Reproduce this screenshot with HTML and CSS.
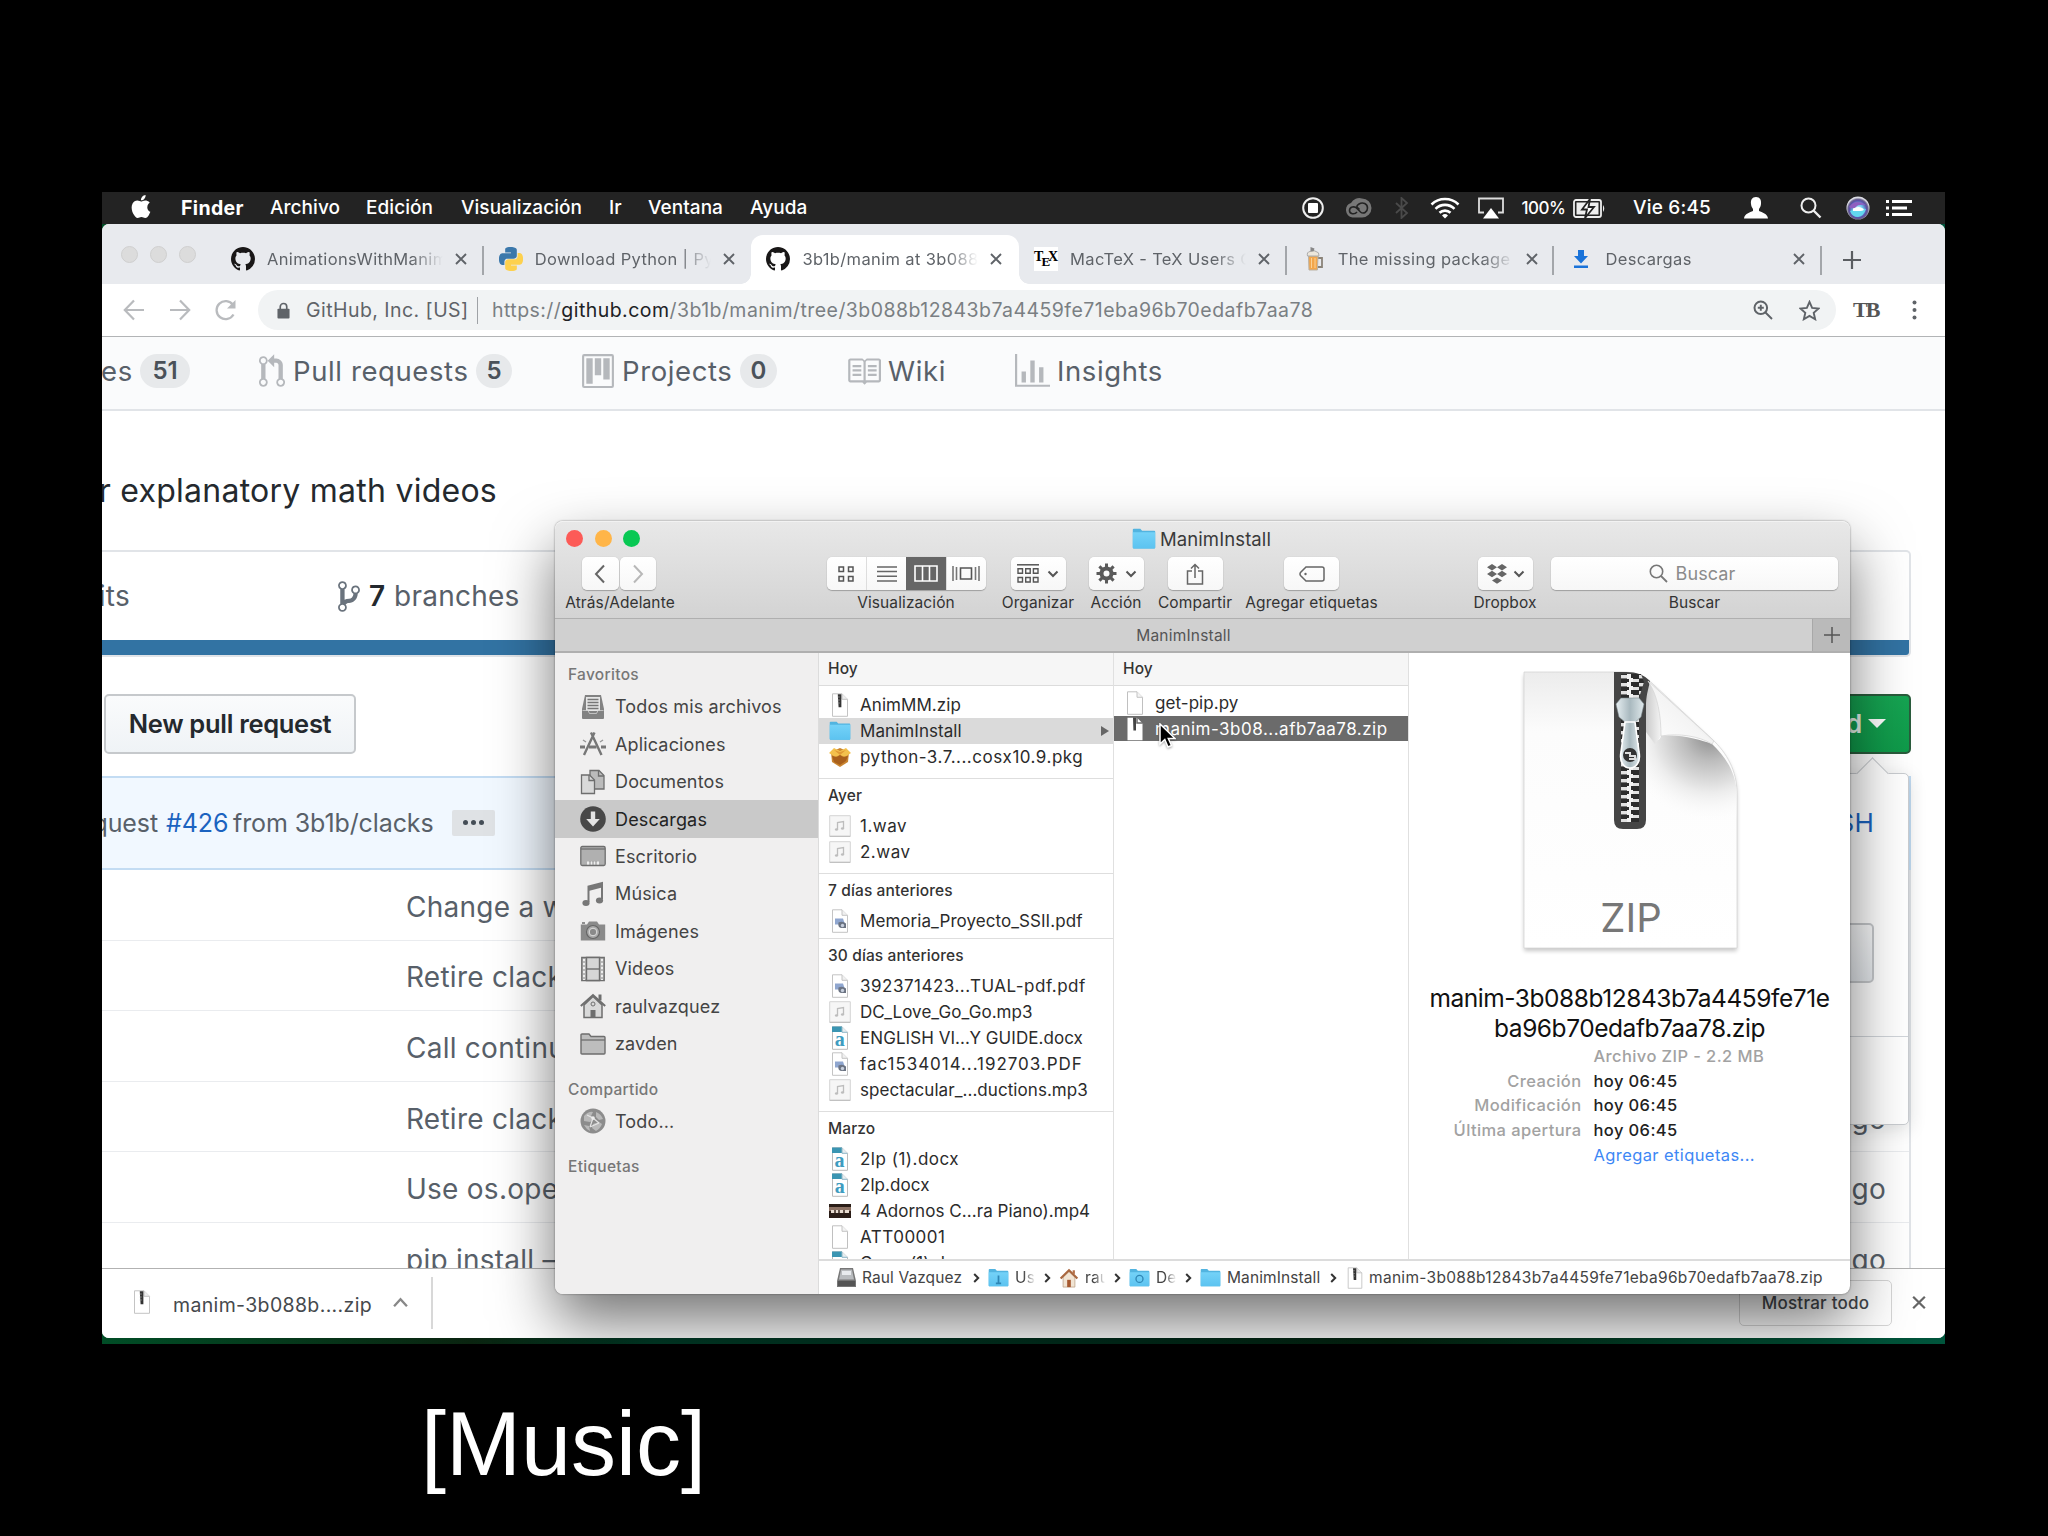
FILE: index.html
```
<!DOCTYPE html>
<html lang="es">
<head>
<meta charset="utf-8">
<title>Finder</title>
<link rel="stylesheet" href="styles.css">
</head>
<body>
<svg class="sprite" aria-hidden="true">
  <defs>
    <linearGradient id="g-folder" x1="0" y1="0" x2="0" y2="1"><stop offset="0" stop-color="#74d2f8"/><stop offset="1" stop-color="#5cc3f0"/></linearGradient>
    <linearGradient id="g-page" x1="0" y1="0" x2="0" y2="1"><stop offset="0" stop-color="#ececec"/><stop offset=".22" stop-color="#fcfcfc"/><stop offset="1" stop-color="#fff"/></linearGradient>
    <linearGradient id="g-flap" x1="0" y1="1" x2=".7" y2=".3"><stop offset="0" stop-color="#fff"/><stop offset=".7" stop-color="#f4f4f4"/><stop offset="1" stop-color="#dcdcdc"/></linearGradient>
    <radialGradient id="g-curl" gradientUnits="userSpaceOnUse" cx="186" cy="62" r="90"><stop offset="0" stop-color="#8a8a8a"/><stop offset=".3" stop-color="#bdbdbd"/><stop offset=".65" stop-color="#ececec"/><stop offset="1" stop-color="#fff" stop-opacity="0"/></radialGradient>
    <linearGradient id="g-fold" gradientUnits="userSpaceOnUse" x1="121" y1="0" x2="137" y2="0"><stop offset="0" stop-color="#c8c8c8"/><stop offset="1" stop-color="#f4f4f4"/></linearGradient>
    <linearGradient id="g-steel" x1="0" y1="0" x2="1" y2="0"><stop offset="0" stop-color="#e6eef1"/><stop offset=".5" stop-color="#a9b9bf"/><stop offset="1" stop-color="#dfe8eb"/></linearGradient>
    <pattern id="teeth" width="18" height="8" patternUnits="userSpaceOnUse" x="97" y="2"><rect width="18" height="8" fill="#2c2c2c"/><rect x="0" y="1" width="8" height="3.4" fill="#e2e2e2"/><rect x="9" y="5" width="9" height="3" fill="#e2e2e2"/><rect x="6" y="0" width="4" height="5" fill="#f2f2f2"/><rect x="8" y="4" width="4" height="4" fill="#f2f2f2"/></pattern>
    <radialGradient id="g-siri" cx=".5" cy=".55" r=".5"><stop offset="0" stop-color="#e9fbff"/><stop offset=".4" stop-color="#6fc9ee"/><stop offset=".75" stop-color="#5b4fa8"/><stop offset=".86" stop-color="#6a6590"/><stop offset="1" stop-color="#dcdce4"/></radialGradient>
  </defs>
  <symbol id="i-x" viewBox="0 0 12 12"><path d="M1 1l10 10M11 1L1 11" fill="none" stroke="currentColor" stroke-width="1.9"/></symbol>
  <symbol id="i-github" viewBox="0 0 16 16"><path fill="#191717" d="M8 0C3.58 0 0 3.58 0 8c0 3.54 2.29 6.53 5.47 7.59.4.07.55-.17.55-.38 0-.19-.01-.82-.01-1.49-2.01.37-2.53-.49-2.69-.94-.09-.23-.48-.94-.82-1.13-.28-.15-.68-.52-.01-.53.63-.01 1.08.58 1.23.82.72 1.21 1.87.87 2.33.66.07-.52.28-.87.51-1.07-1.78-.2-3.64-.89-3.64-3.95 0-.87.31-1.59.82-2.15-.08-.2-.36-1.02.08-2.12 0 0 .67-.21 2.2.82.64-.18 1.32-.27 2-.27.68 0 1.36.09 2 .27 1.53-1.04 2.2-.82 2.2-.82.44 1.1.16 1.92.08 2.12.51.56.82 1.27.82 2.15 0 3.07-1.87 3.75-3.65 3.95.29.25.54.73.54 1.48 0 1.07-.01 1.93-.01 2.2 0 .21.15.46.55.38A8.013 8.013 0 0016 8c0-4.42-3.58-8-8-8z"/></symbol>
  <symbol id="i-py" viewBox="0 0 24 24"><path d="M14.25.18l.9.2.73.26.59.3.45.32.34.34.25.34.16.33.1.3.04.26.02.2-.01.13V8.5l-.05.63-.13.55-.21.46-.26.38-.3.31-.33.25-.35.19-.35.14-.33.1-.3.07-.26.04-.21.02H8.77l-.69.05-.59.14-.5.22-.41.27-.33.32-.27.35-.2.36-.15.37-.1.35-.07.32-.04.27-.02.21v3.06H3.17l-.21-.03-.28-.07-.32-.12-.35-.18-.36-.26-.36-.36-.35-.46-.32-.59-.28-.73-.21-.88-.14-1.05-.05-1.23.06-1.22.16-1.04.24-.87.32-.71.36-.57.4-.44.42-.33.42-.24.4-.16.36-.1.32-.05.24-.01h.16l.06.01h8.16v-.83H6.18l-.01-2.75-.02-.37.05-.34.11-.31.17-.28.25-.26.31-.23.38-.2.44-.18.51-.15.58-.12.64-.1.71-.06.77-.04.84-.02 1.27.05z"/></symbol>
  <symbol id="i-chev" viewBox="0 0 7 10"><path d="M1.2 1l4 4-4 4" fill="none" stroke="#333" stroke-width="2"/></symbol>
  <symbol id="i-down" viewBox="0 0 12 8"><path d="M1.5 1.5L6 6l4.500-4.500" fill="none" stroke="#555" stroke-width="2"/></symbol>
  <symbol id="f-zip" viewBox="0 0 22 24"><path d="M3.500.8h9.500l5.500 5.500v17h-15z" fill="#fff" stroke="#c4c4c4"/><path d="M13 .8v5.500h5.500" fill="#eee" stroke="#c4c4c4"/><path d="M8.800 1.300h3.600v13H9.600z" fill="#333"/><path d="M8.800 4h2M8.800 7h2M8.800 10h2" stroke="#999" stroke-width=".8"/></symbol>
  <symbol id="f-zipsel" viewBox="0 0 22 24"><path d="M3.500.8h9.500l5.500 5.500v17h-15z" fill="#fff"/><path d="M13 0v6h6" fill="none" stroke="#6b6b6b" stroke-width="1.500"/><path d="M9 .5h3v13H9.400z" fill="#444"/></symbol>
  <symbol id="f-blank" viewBox="0 0 22 24"><path d="M3.500.8h9.500l5.500 5.500v17h-15z" fill="#fff" stroke="#c0c0c0"/><path d="M13 .8v5.500h5.500" fill="#f3f3f3" stroke="#c4c4c4"/></symbol>
  <symbol id="f-folder" viewBox="0 0 24 22"><path d="M.8 1.800q0-1 1-1h6.500l1.800 2h12.100q1 0 1 1V19.500q0 1-1 1H1.800q-1 0-1-1z" fill="#52b4e0"/><path d="M.8 4.300h22.400V19.500q0 1-1 1H1.800q-1 0-1-1z" fill="url(#g-folder)"/></symbol>
  <symbol id="f-pkg" viewBox="0 0 22 22"><path d="M2 6l9-4 9 4-1 10-8 5-8-5z" fill="#c9842f"/><path d="M0 7l5-5 6 3 6-3 5 5-6 4-5-2-5 2z" fill="#f3c14d"/><path d="M3 10l5 1 3-2 3 2 5-1-2 5-6 4-6-3z" fill="#a9601c"/><path d="M5 4l6 2 6-2-6 5z" fill="#e09a35"/></symbol>
  <symbol id="f-audio" viewBox="0 0 22 22"><path d="M.7.7h20.600v20.600H.7z" fill="#f6f6f6" stroke="#d4d4d4"/><path d="M.7 21.300h20.600" stroke="#bbb"/><path d="M8.500 14.500V7.500l6-1v7" fill="none" stroke="#bdbdbd" stroke-width="1.300"/><ellipse cx="7.500" cy="14.500" rx="1.600" ry="1.200" fill="#bdbdbd"/><ellipse cx="13.500" cy="13.500" rx="1.600" ry="1.200" fill="#bdbdbd"/></symbol>
  <symbol id="f-pdf" viewBox="0 0 22 24"><path d="M3.500.8h9.500l5.500 5.500v17h-15z" fill="#fff" stroke="#c4c4c4"/><path d="M13 .8v5.500h5.500" fill="#f0f0f0" stroke="#c4c4c4"/><path d="M6 9.500h8l2 6H6z" fill="#8fa6cf"/><path d="M9.500 13.500q4-2 7.500 1v4.500h-4q-4.500 0-3.500-5.500z" fill="#6b7382"/><circle cx="13.500" cy="16.500" r="1.700" fill="#c7cfdd"/></symbol>
  <symbol id="f-docx" viewBox="0 0 22 24"><path d="M3.500.8h9.500l5.500 5.500v17h-15z" fill="#fff" stroke="#bbb"/><path d="M3 .5h10v5.500H3z" fill="#3b95b2"/><path d="M13 .8v5.500h5.500" fill="#e6eef1" stroke="#8db6c6"/><text x="10.800" y="20" text-anchor="middle" class="glyph-a">a</text></symbol>
  <symbol id="f-video" viewBox="0 0 22 14"><path d="M0 0h22v14H0z" fill="#2a1d17"/><path d="M0 3h22v4H0z" fill="#8c7264"/><path d="M2 6h18v3H2z" fill="#e9ddd2"/><path d="M6 6v3M10 6v3M15 6v3" stroke="#3a2a22" stroke-width="1.500"/></symbol>
  <symbol id="f-home" viewBox="0 0 20 22"><path d="M3.500 10v11h13V10L10 4z" fill="#f1e4d3" stroke="#b99c80" stroke-width=".8"/><path d="M.8 11.500L10 2.500l9.200 9" fill="none" stroke="#a9673f" stroke-width="2.400"/><path d="M14 2.500h2.500v4H14z" fill="#b5714a"/><path d="M8 13h4v8H8z" fill="#a5582f"/></symbol>
</svg>

<main class="desktop">
  <header class="menubar">
    <nav class="menus">
      <svg class="apple" viewBox="0 0 24 24"><path fill="#fff" d="M12.152 6.896c-.948 0-2.415-1.078-3.96-1.04-2.04.027-3.91 1.183-4.961 3.014-2.117 3.675-.546 9.103 1.519 12.09 1.013 1.454 2.208 3.09 3.792 3.039 1.52-.065 2.09-.987 3.935-.987 1.831 0 2.35.987 3.96.948 1.637-.026 2.676-1.48 3.676-2.948 1.156-1.688 1.636-3.325 1.662-3.415-.039-.013-3.182-1.221-3.22-4.857-.026-3.04 2.48-4.494 2.597-4.559-1.429-2.09-3.623-2.324-4.39-2.376-2-.156-3.675 1.09-4.61 1.09zM15.53 3.83c.843-1.012 1.4-2.427 1.245-3.83-1.207.052-2.662.805-3.532 1.818-.78.896-1.454 2.338-1.273 3.714 1.338.104 2.715-.688 3.559-1.701"/></svg>
      <b>Finder</b><span>Archivo</span><span>Edición</span><span>Visualización</span><span>Ir</span><span>Ventana</span><span>Ayuda</span>
    </nav>
    <div class="status">
      <svg width="22" height="22" viewBox="0 0 22 22"><circle cx="11" cy="11" r="9.800" fill="none" stroke="#eee" stroke-width="2"/><rect x="6" y="6" width="10" height="10" rx="1" fill="#fff"/></svg>
      <svg width="28" height="22" viewBox="0 0 28 22"><path d="M8.500 20.500a7.500 7.500 0 01-1.500-14.500A9.500 9.500 0 0118 1.500a9.500 9.500 0 010 19z" fill="#777"/><path d="M13 15c-2.500 3-7.500 2-7.500-1.500s5-5 7.500-2l3.500 3.500c3 2.500 7 0 7-4s-4.500-6.500-8.500-4-1.500 3.500.5 5.500" fill="none" stroke="#232323" stroke-width="1.600"/></svg>
      <svg width="14" height="22" viewBox="0 0 14 22"><path d="M1 6l11 10-5.500 5V1L12 6 1 16" fill="none" stroke="#4a4a4a" stroke-width="1.800"/></svg>
      <svg width="30" height="22" viewBox="0 0 30 22"><g fill="none" stroke="#fff" stroke-width="2.600"><path d="M1.500 7.500a19.500 19.500 0 0127 0"/><path d="M5.500 11.800a13.500 13.500 0 0119 0"/><path d="M9.500 15.800a8 8 0 0111 0"/></g><path d="M12 18.500a4.400 4.400 0 016 0l-3 3z" fill="#fff"/></svg>
      <svg width="26" height="22" viewBox="0 0 26 22"><path d="M6 15.500H1V1.500h24v14h-5" fill="none" stroke="#ddd" stroke-width="1.800"/><path d="M13 11l8 10.500H5z" fill="#fff"/></svg>
      <span class="pct">100%</span>
      <svg width="33" height="19" viewBox="0 0 33 19"><rect x="1" y="1" width="27" height="17" rx="2" fill="none" stroke="#eee" stroke-width="1.800"/><rect x="3.500" y="3.500" width="22" height="12" fill="#eee"/><path d="M30 6q2.500 3.500 0 7z" fill="#eee"/><path d="M17 0L9 10.500h5L12 19l9-11h-5.500z" fill="#fff" stroke="#222" stroke-width="1.800"/></svg>
      <span class="clock">Vie 6:45</span>
      <svg width="24" height="22" viewBox="0 0 24 22"><path d="M12 0c4 0 5.500 3 5 7-.3 3-1.500 4-2 5v2c3 1.500 8.500 2.500 9 7.500H0c.5-5 6-6 9-7.500v-2c-.5-1-1.700-2-2-5-.5-4 1-7 5-7z" fill="#fff"/></svg>
      <svg width="22" height="22" viewBox="0 0 22 22"><circle cx="8.500" cy="8.500" r="7" fill="none" stroke="#eee" stroke-width="2"/><path d="M13.500 13.500l7 7" stroke="#eee" stroke-width="2.400"/></svg>
      <svg width="24" height="24" viewBox="0 0 24 24"><circle cx="12" cy="12" r="11.500" fill="url(#g-siri)"/><path d="M3 11q7-9 17-2-8-1-10 2t-7 0z" fill="#8f5fc0"/><path d="M4 15q8-4 16-2-2 7-8 8-6 0-8-6z" fill="#62d7ee"/><path d="M7 12.500q6-3 10 0t-10 2.500z" fill="#fff"/></svg>
      <svg width="26" height="16" viewBox="0 0 26 16"><path d="M0 1.500h3M0 8h3M0 14.500h3M6 1.500h20M6 8h15M6 14.500h20" stroke="#fff" stroke-width="2.800"/></svg>
    </div>
  </header>

  <section class="browser">
    <div class="tabstrip">
      <div class="dots"><i></i><i></i><i></i></div>
      <div class="tab sep"><svg class="fav"><use href="#i-github"/></svg><span class="tt">AnimationsWithManim</span><svg class="x"><use href="#i-x"/></svg></div>
      <div class="tab"><svg class="fav" viewBox="0 0 24 24"><use href="#i-py" width="24" height="24" fill="#3b78ab"/><g transform="rotate(180 12 12)"><use href="#i-py" width="24" height="24" fill="#fdd14e"/></g></svg><span class="tt">Download Python | Pyt</span><svg class="x"><use href="#i-x"/></svg></div>
      <div class="tab active"><svg class="fav"><use href="#i-github"/></svg><span class="tt">3b1b/manim at 3b088b</span><svg class="x"><use href="#i-x"/></svg></div>
      <div class="tab sep"><span class="texfav">T<sub>E</sub>X</span><span class="tt">MacTeX - TeX Users Gr</span><svg class="x"><use href="#i-x"/></svg></div>
      <div class="tab sep"><svg class="fav" viewBox="0 0 24 24"><path d="M16 11h4v9H16" fill="none" stroke="#8a8378" stroke-width="1.800"/><path d="M6.500 9h9.500l-.6 14H7z" fill="#f3a64a" stroke="#b9b1a4"/><path d="M5.500 9q-1-4 2.500-4.500 3-2.500 6 0 3.500.5 3 4.500z" fill="#ece7dc" stroke="#aaa"/><path d="M8.500 0l4 1.500-1 3h-3z" fill="#888"/><path d="M9.500 11v10M13 11v10" stroke="#fbd195"/></svg><span class="tt">The missing package m</span><svg class="x"><use href="#i-x"/></svg></div>
      <div class="tab sep"><svg class="fav" viewBox="0 0 24 24"><path d="M9 3h6v6h4l-7 7.500L5 9h4zM5 18.500h14v2.500H5z" fill="#1a73d9"/></svg><span class="tt">Descargas</span><svg class="x"><use href="#i-x"/></svg></div>
      <svg class="plus" viewBox="0 0 18 18"><path d="M9 0v18M0 9h18" stroke="#5a5d61" stroke-width="2.200"/></svg>
    </div>

    <div class="toolbar">
      <div class="navbtns">
        <svg width="22" height="22" viewBox="0 0 22 22"><path d="M21 11H2M11 1.500L1.800 11l9.200 9.500" fill="none" stroke="#b9bbbe" stroke-width="2.200"/></svg>
        <svg width="22" height="22" viewBox="0 0 22 22"><path d="M1 11h19M11 1.500l9.200 9.500-9.200 9.500" fill="none" stroke="#b9bbbe" stroke-width="2.200"/></svg>
        <svg width="22" height="22" viewBox="0 0 22 22"><path d="M18.500 15.500a9 9 0 11-.5-9.500" fill="none" stroke="#b9bbbe" stroke-width="2.300"/><path d="M20.500 1v8.500H12z" fill="#b9bbbe"/></svg>
      </div>
      <div class="omnibox">
        <svg class="lock" viewBox="0 0 14 18"><path d="M3.500 8V5a3.500 3.500 0 017 0v3" fill="none" stroke="#5f6368" stroke-width="1.800"/><rect x=".5" y="7" width="13" height="10.500" rx="1" fill="#5f6368"/></svg>
        <span class="org">GitHub, Inc. [US]</span>
        <span class="url">https://<em>github.com</em>/3b1b/manim/tree/3b088b12843b7a4459fe71eba96b70edafb7aa78</span>
        <svg class="mag" viewBox="0 0 20 20"><circle cx="7.800" cy="7.800" r="6.300" fill="none" stroke="#5f6368" stroke-width="2"/><path d="M12.500 12.500l6.500 6.500M4.800 7.800h6M7.800 4.800v6" stroke="#5f6368" stroke-width="1.900"/></svg>
        <svg class="star" viewBox="0 0 20 20"><path d="M10 1.800l2.500 5.700 6.200.6-4.700 4.100 1.400 6.100L10 15.100l-5.400 3.200L6 12.200 1.300 8.100l6.200-.6z" fill="none" stroke="#5f6368" stroke-width="1.800"/></svg>
      </div>
      <span class="ext">TB</span>
      <svg class="more" viewBox="0 0 5 20"><circle cx="2.500" cy="2.500" r="2"/><circle cx="2.500" cy="10" r="2"/><circle cx="2.500" cy="17.500" r="2"/></svg>
    </div>

    <div class="page">
      <nav class="reponav">
        <div class="rn rn-issues"><span>es</span><b>51</b></div>
        <div class="rn rn-pulls"><svg width="26" height="35" viewBox="0 0 12 16"><path d="M11 11.280V5c-.030-.780-.340-1.470-.940-2.060C9.460 2.350 8.780 2.030 8 2H7V0L4 3l3 3V4h1c.270.020.480.110.690.310.210.200.300.420.310.690v6.280A1.993 1.993 0 0 0 10 15a1.993 1.993 0 0 0 1-3.720zm-1 2.920c-.660 0-1.200-.550-1.200-1.200 0-.650.550-1.200 1.200-1.200.650 0 1.200.550 1.200 1.200 0 .650-.550 1.200-1.200 1.200zM4 3c0-1.110-.890-2-2-2a1.993 1.993 0 0 0-1 3.720v6.560A1.993 1.993 0 0 0 2 15a1.993 1.993 0 0 0 1-3.720V4.720c.590-.340 1-.980 1-1.720zm-.8 10c0 .660-.550 1.200-1.200 1.200-.650 0-1.200-.550-1.200-1.200 0-.650.550-1.200 1.200-1.200.650 0 1.200.550 1.200 1.200zM2 4.200C1.340 4.200.8 3.650.8 3c0-.650.550-1.200 1.200-1.200.650 0 1.200.550 1.200 1.200 0 .650-.550 1.200-1.200 1.200z"/></svg><span>Pull requests</span><b>5</b></div>
        <div class="rn rn-projects"><svg width="32" height="34" viewBox="0 0 15 16"><path fill-rule="evenodd" d="M10 12h3V2h-3v10zm-4-2h3V2H6v8zm-4 4h3V2H2v12zm-1 1h13V1H1v14zM14 0H1a1 1 0 0 0-1 1v14a1 1 0 0 0 1 1h13a1 1 0 0 0 1-1V1a1 1 0 0 0-1-1z"/></svg><span>Projects</span><b>0</b></div>
        <div class="rn rn-wiki"><svg width="35" height="35" viewBox="0 0 16 16"><path d="M3 5h4v1H3V5zm0 3h4V7H3v1zm0 2h4V9H3v1zm11-5h-4v1h4V5zm0 2h-4v1h4V7zm0 2h-4v1h4V9zm2-6v9c0 .550-.450 1-1 1H9.500l-1 1-1-1H2c-.550 0-1-.450-1-1V3c0-.550.450-1 1-1h5.500l1 1 1-1H15c.550 0 1 .450 1 1zm-8 .5L7.500 3H2v9h6V3.500zm7-.5H9.500l-.5.5V12h6V3z"/></svg><span>Wiki</span></div>
        <div class="rn rn-insights"><svg width="35" height="35" viewBox="0 0 16 16"><path d="M16 14v1H0V0h1v14h15zM5 13H3V8h2v5zm4 0H7V3h2v10zm4 0h-2V6h2v7z"/></svg><span>Insights</span></div>
      </nav>
      <p class="desc"><span>r explanatory math videos</span></p>
      <div class="stats">
        <div class="statrow">
          <span class="commits">its</span>
          <svg class="branch" viewBox="0 0 10 16"><path fill="#6a737d" d="M10 5c0-1.110-.890-2-2-2a1.993 1.993 0 0 0-1 3.720v.3c-.020.520-.230.980-.630 1.380-.4.4-.860.610-1.380.630-.830.020-1.480.160-2 .450V4.720a1.993 1.993 0 0 0-1-3.720C.880 1 0 1.890 0 3a2 2 0 0 0 1 1.720v6.560c-.590.350-1 .990-1 1.720 0 1.110.890 2 2 2 1.110 0 2-.890 2-2 0-.530-.2-1-.530-1.360.090-.060.480-.410.590-.470.250-.110.560-.170.940-.170 1.050-.050 1.950-.450 2.750-1.250S8.950 7.770 9 6.730h-.020C9.590 6.370 10 5.730 10 5zM2 1.800c.660 0 1.200.550 1.200 1.200 0 .650-.550 1.200-1.200 1.200C1.350 4.200.8 3.650.8 3c0-.650.550-1.200 1.200-1.200zm0 12.410c-.660 0-1.200-.550-1.200-1.200 0-.650.550-1.200 1.200-1.200.650 0 1.200.550 1.200 1.200 0 .650-.550 1.200-1.200 1.200zm6-8c-.660 0-1.200-.550-1.200-1.200 0-.650.550-1.200 1.200-1.200.650 0 1.200.550 1.200 1.200 0 .650-.550 1.200-1.200 1.200z"/></svg>
          <b>7</b><span>branches</span>
        </div>
        <div class="langbar"></div>
      </div>
      <div class="actions">
        <button class="btn">New pull request</button>
        <button class="btn green">d<i></i></button>
      </div>
      <div class="files">
        <div class="tease"><span class="q">quest</span><a>#426</a><span>from 3b1b/clacks</span><span class="dots3"><i></i><i></i><i></i></span></div>
        <div class="frow"><span>Change a w</span></div>
        <div class="frow"><span>Retire clack</span></div>
        <div class="frow"><span>Call continu</span></div>
        <div class="frow"><span>Retire clack</span><span>go</span></div>
        <div class="frow"><span>Use os.ope</span><span>go</span></div>
        <div class="frow"><span>pip install –</span><span>go</span></div>
      </div>
      <div class="popover"><div class="poptop"><a>SH</a><div class="copy"></div></div></div>
    </div>

    <footer class="shelf">
      <svg class="zipmini" width="22" height="24"><use href="#f-zip"/></svg>
      <span class="dl">manim-3b088b....zip</span>
      <svg class="caret" viewBox="0 0 14 10"><path d="M1 8.500l6-6.500 6 6.500" fill="none" stroke="#888" stroke-width="2.200"/></svg>
      <span class="vr"></span>
      <button class="showall">Mostrar todo</button>
      <svg class="close" viewBox="0 0 12 12"><use href="#i-x"/></svg>
    </footer>
  </section>

  <section class="finder">
    <header class="fhead">
      <div class="ftitle">
        <div class="lights"><i class="r"></i><i class="y"></i><i class="g"></i></div>
        <div class="tname"><svg width="24" height="22"><use href="#f-folder"/></svg><span>ManimInstall</span></div>
      </div>
      <div class="tools">
        <div class="tool t-nav"><div class="pair"><span class="fb"><svg width="12" height="20" viewBox="0 0 12 20"><path d="M10 1.500L2 10l8 8.500" fill="none" stroke="#666" stroke-width="2"/></svg></span><span class="fb"><svg width="12" height="20" viewBox="0 0 12 20"><path d="M2 1.500l8 8.500-8 8.500" fill="none" stroke="#b8b8b8" stroke-width="2"/></svg></span></div><label>Atrás/Adelante</label></div>
        <div class="tool t-view"><div class="fb seg">
          <span><svg width="16" height="16" viewBox="0 0 16 16"><path d="M1 1h4.500v4.500H1zM10.500 1H15v4.500h-4.500zM1 10.500h4.500V15H1zM10.500 10.500H15V15h-4.500z" fill="none" stroke="#555" stroke-width="1.500"/></svg></span>
          <span><svg width="20" height="16" viewBox="0 0 20 16"><path d="M0 1h20M0 5.600h20M0 10.200h20M0 14.900h20" stroke="#666" stroke-width="1.500"/></svg></span>
          <span class="on"><svg width="24" height="17" viewBox="0 0 24 17"><path d="M1 1h22v15H1z" fill="none" stroke="#fff" stroke-width="1.600"/><path d="M8.500 1v15M15.500 1v15" stroke="#fff" stroke-width="1.600"/></svg></span>
          <span><svg width="28" height="17" viewBox="0 0 28 17"><path d="M8.500 3h11v11h-11z" fill="none" stroke="#555" stroke-width="1.600"/><path d="M1 1v15M27 1v15M4.500 2v13M23.500 2v13" stroke="#777" stroke-width="1.600"/></svg></span>
        </div><label>Visualización</label></div>
        <div class="tool t-org"><span class="fb"><svg width="22" height="20" viewBox="0 0 22 20"><path d="M0 .8h22" stroke="#555" stroke-width="1.500"/><path d="M1 4.800h4.500v4.500H1zM8.700 4.800h4.500v4.500H8.700zM16.400 4.800H21v4.500h-4.600zM1 13.500h4.500V18H1zM8.700 13.500h4.500V18H8.700zM16.400 13.500H21V18h-4.600z" fill="none" stroke="#555" stroke-width="1.400"/></svg><svg width="12" height="8"><use href="#i-down"/></svg></span><label>Organizar</label></div>
        <div class="tool t-act"><span class="fb"><svg width="21" height="21" viewBox="0 0 21 21"><circle cx="10.500" cy="10.500" r="5" fill="none" stroke="#5a5a5a" stroke-width="4"/><g stroke="#5a5a5a" stroke-width="3"><path d="M10.500.5v4M10.500 16.500v4M.5 10.500h4M16.500 10.500h4M3.400 3.400l3 3M14.600 14.600l3 3M3.400 17.600l3-3M14.600 6.400l3-3"/></g></svg><svg width="12" height="8"><use href="#i-down"/></svg></span><label>Acción</label></div>
        <div class="tool t-share"><span class="fb"><svg width="18" height="22" viewBox="0 0 18 22"><path d="M6 8H1.500v13h15V8H12" fill="none" stroke="#666" stroke-width="1.500"/><path d="M9 15V1.500M5 5.500l4-4 4 4" fill="none" stroke="#666" stroke-width="1.500"/></svg></span><label>Compartir</label></div>
        <div class="tool t-tag"><span class="fb"><svg width="26" height="16" viewBox="0 0 26 16"><path d="M7 1h16q2 0 2 2v10q0 2-2 2H7L1.500 9.500q-1-1.500 0-3z" fill="none" stroke="#666" stroke-width="1.500"/><circle cx="6.500" cy="8" r="1.200" fill="#666"/></svg></span><label>Agregar etiquetas</label></div>
        <div class="tool t-drop"><span class="fb"><svg width="22" height="20" viewBox="0 0 22 20"><path d="M6 0l5 3.200-5 3.200L1 3.200zM16 0l5 3.200-5 3.200-5-3.200zM6 6.800l5 3.200-5 3.200L1 10zM16 6.800l5 3.200-5 3.200-5-3.200zM11 13.400l5 3.200-5 3.200-5-3.200z" fill="#666"/></svg><svg width="12" height="8"><use href="#i-down"/></svg></span><label>Dropbox</label></div>
        <div class="tool t-search"><span class="fb"><svg width="19" height="19" viewBox="0 0 19 19"><circle cx="7.500" cy="7.500" r="6.200" fill="none" stroke="#777" stroke-width="1.600"/><path d="M12 12l6 6" stroke="#777" stroke-width="1.800"/></svg><span class="ph">Buscar</span></span><label>Buscar</label></div>
      </div>
    </header>
    <div class="ftabs"><span>ManimInstall</span><i><svg width="16" height="16" viewBox="0 0 16 16"><path d="M8 0v16M0 8h16" stroke="#555" stroke-width="1.500"/></svg></i></div>
    <div class="fbody">
      <aside class="side">
        <h4>Favoritos</h4>
        <ul>
          <li><svg viewBox="0 0 26 26"><path d="M5 1h16l3 14v9q0 1-1 1H3q-1 0-1-1v-9z" fill="#828282"/><path d="M6 3h14v14H6z" fill="#e6e6e6"/><path d="M7.500 5.500h11M7.500 8.500h11M7.500 11.500h11M7.500 14.500h11" stroke="#777" stroke-width="1.300"/><path d="M2.500 16.500H8l1.500 3h7l1.500-3h5.500V24h-21z" fill="#828282"/><path d="M2.500 16.500H8l1.500 3h7l1.500-3h5.500" fill="none" stroke="#ddd" stroke-width=".7"/></svg>Todos mis archivos</li>
          <li><svg viewBox="0 0 26 26"><path d="M11 1.500L21.500 24M14.500 1.500L4 24" fill="none" stroke="#777" stroke-width="2.400"/><path d="M0 16h5M9 16h7.500M21 16h5" stroke="#777" stroke-width="3.200"/><path d="M6 11l-3-2M20 11l3-2" stroke="#999" stroke-width="1.500"/></svg>Aplicaciones</li>
          <li><svg viewBox="0 0 26 26"><path d="M10 1.500h9l5 5V20H10z" fill="#bbb" stroke="#6e6e6e" stroke-width="1.300"/><path d="M18.500 1.500v5.500H24" fill="none" stroke="#6e6e6e" stroke-width="1.300"/><path d="M1.500 6h8l5 5v13.500h-13z" fill="#d9d9d9" stroke="#6e6e6e" stroke-width="1.300"/><path d="M9 6v5.500h5.500" fill="none" stroke="#6e6e6e" stroke-width="1.300"/></svg>Documentos</li>
          <li class="sel"><svg viewBox="0 0 26 26"><circle cx="13" cy="13" r="12.800" fill="#484848"/><path d="M10.800 5.500h4.400V13h4.600L13 20.500 6.200 13h4.600z" fill="#e4e4e4"/></svg>Descargas</li>
          <li><svg viewBox="0 0 26 26"><rect x=".8" y="3.500" width="24.400" height="19" rx="1.500" fill="#b0b0b0" stroke="#6e6e6e" stroke-width="1.300"/><path d="M1 6h24" stroke="#6e6e6e" stroke-width="1.300"/><path d="M7 18.500h12v3H7z" fill="#eee"/><path d="M10 18v4M13 18v4M16 18v4" stroke="#888"/></svg>Escritorio</li>
          <li><svg viewBox="0 0 26 26"><path d="M8.500 21V5.500L22 2v16" fill="none" stroke="#777" stroke-width="2"/><path d="M8.500 5.500L22 2v4.500L8.500 10z" fill="#777"/><ellipse cx="6" cy="22" rx="3.600" ry="3" fill="#777"/><ellipse cx="19.500" cy="19.500" rx="3.600" ry="3" fill="#777"/></svg>Música</li>
          <li><svg viewBox="0 0 26 26"><path d="M.8 6.500H7l2-3h8l2 3h6.200v16H.8z" fill="#8a8a8a"/><circle cx="13" cy="14" r="6.500" fill="#a9a9a9" stroke="#666" stroke-width="1.200"/><circle cx="13" cy="14" r="3.800" fill="#8a8a8a" stroke="#ddd"/><path d="M2 5h3" stroke="#777" stroke-width="1.600"/></svg>Imágenes</li>
          <li><svg viewBox="0 0 26 26"><path d="M1.800 1.500h22.400v23H1.800z" fill="#b9b9b9" stroke="#6e6e6e" stroke-width="1.400"/><path d="M6.500 1.500h13v23h-13z" fill="#d6d6d6" stroke="#6e6e6e" stroke-width="1.400"/><path d="M6.500 13h13" stroke="#6e6e6e" stroke-width="1.400"/><path d="M4 3v21M22 3v21" stroke="#eee" stroke-width="2" stroke-dasharray="2 2"/></svg>Videos</li>
          <li><svg viewBox="0 0 26 26"><path d="M4 12v12.500h18V12L13 3.500z" fill="#d9d9d9" stroke="#6e6e6e" stroke-width="1.500"/><path d="M.8 13L13 2l12.200 11" fill="none" stroke="#6e6e6e" stroke-width="2"/><path d="M18.500 1.500h3v6h-3z" fill="#6e6e6e"/><path d="M10.500 17h5v7.500h-5z" fill="#6e6e6e"/><circle cx="13" cy="11" r="2" fill="none" stroke="#6e6e6e"/></svg>raulvazquez</li>
          <li><svg viewBox="0 0 26 26"><path d="M1 4q0-1 1-1h7l2 2.500h13q1 0 1 1V22q0 1-1 1H2q-1 0-1-1z" fill="#bdbdbd" stroke="#6e6e6e" stroke-width="1.400"/><path d="M1 9h24" stroke="#6e6e6e" stroke-width="1.300"/></svg>zavden</li>
        </ul>
        <h4 class="h-shared">Compartido</h4>
        <ul><li><svg viewBox="0 0 26 26"><circle cx="13" cy="13" r="12.500" fill="#8c8c8c"/><path d="M4 8q5-5 9-4l-2 4 4 3-5 3-6-1zM16 4q5 2 7 7l-4 1-3-3zM13 16l6-2 3 2q-2 5-6 7l-4-3zM4 17l5 1 1 5q-4-2-6-6z" fill="#b9b9b9"/><path d="M13 10l-3 9M13 10l6 5M7 7l6 3M19 15l-9 4" fill="none" stroke="#e4e4e4" stroke-width="1.200"/><circle cx="13" cy="10" r="1.800" fill="#eee"/></svg>Todo...</li></ul>
        <h4 class="h-tags">Etiquetas</h4>
      </aside>
      <div class="right">
        <div class="cols">
          <div class="col c1">
            <h5 class="first">Hoy</h5>
            <ul class="g1">
              <li><svg><use href="#f-zip"/></svg>AnimMM.zip</li>
              <li class="dim"><svg><use href="#f-folder"/></svg>ManimInstall<i class="arrow"></i></li>
              <li class="wide"><svg><use href="#f-pkg"/></svg>python-3.7....cosx10.9.pkg</li>
            </ul>
            <h5>Ayer</h5>
            <ul class="g2">
              <li class="wide"><svg><use href="#f-audio"/></svg>1.wav</li>
              <li class="wide"><svg><use href="#f-audio"/></svg>2.wav</li>
            </ul>
            <h5>7 días anteriores</h5>
            <ul class="g3"><li><svg><use href="#f-pdf"/></svg>Memoria_Proyecto_SSII.pdf</li></ul>
            <h5>30 días anteriores</h5>
            <ul class="g4">
              <li class="wide"><svg><use href="#f-pdf"/></svg>392371423...TUAL-pdf.pdf</li>
              <li><svg><use href="#f-audio"/></svg>DC_Love_Go_Go.mp3</li>
              <li><svg><use href="#f-docx"/></svg>ENGLISH VI...Y GUIDE.docx</li>
              <li class="wider"><svg><use href="#f-pdf"/></svg>fac1534014...192703.PDF</li>
              <li><svg><use href="#f-audio"/></svg>spectacular_...ductions.mp3</li>
            </ul>
            <h5>Marzo</h5>
            <ul>
              <li class="wide"><svg><use href="#f-docx"/></svg>2lp (1).docx</li>
              <li><svg><use href="#f-docx"/></svg>2lp.docx</li>
              <li><svg><use href="#f-video"/></svg>4 Adornos C...ra Piano).mp4</li>
              <li class="wide"><svg><use href="#f-blank"/></svg>ATT00001</li>
              <li><svg><use href="#f-docx"/></svg>Carro (1).docx</li>
            </ul>
          </div>
          <div class="col c2">
            <h5 class="first">Hoy</h5>
            <ul class="g1">
              <li><svg><use href="#f-blank"/></svg>get-pip.py</li>
              <li class="dark wide"><svg><use href="#f-zipsel"/></svg>manim-3b08...afb7aa78.zip</li>
            </ul>
          </div>
          <div class="preview">
            <svg class="bigzip" viewBox="-6 -4 225 290">
              <path d="M0 0H98c14 0 23 4 32 13l58 54c15 14 25 32 25 54v155H0z" fill="#000" opacity=".22" transform="translate(0 3)" class="soft"/>
              <path d="M0 0H98c14 0 23 4 32 13l58 54c15 14 25 32 25 54v155H0z" fill="url(#g-page)" stroke="#d5d5d5" stroke-width=".8"/>
              <path d="M122 40c6 20 12 35 15 24 20-2 40 4 51 8 15 14 24 30 25 50v60H122z" fill="url(#g-curl)"/>
              <path d="M121 5c12 14 16 36 16 59l-6 8-9-12z" fill="url(#g-fold)"/>
              <path d="M90 0h12c11 0 18 3 24 9-2 10-4 14-4 26v113q0 9-9 9H99q-9 0-9-9z" fill="#454545"/>
              <path d="M97 2h20l3 8-5 16v124H97z" fill="url(#teeth)"/>
              <path d="M97 26h18l5 6-3 13-7 6h-8l-7-6-3-13z" fill="url(#g-steel)" stroke="#7d8a8f" stroke-width=".6"/>
              <path d="M101 50h10l4 30c2 10-3 16-9 16s-11-6-9-16z" fill="url(#g-steel)" stroke="#fff" stroke-width="1.600"/>
              <circle cx="106" cy="83" r="7" fill="#333"/><path d="M101 81h5v3h5v3h-6" fill="none" stroke="#ddd" stroke-width="2"/>
              <path d="M124 9c10 15 13 35 13 55 18-3 38 0 51 8l2-3z" fill="url(#g-flap)" stroke="#d6d6d6" stroke-width=".8"/>
              <text x="107" y="260" text-anchor="middle" class="ziptext">ZIP</text>
            </svg>
            <p class="pname"><span>manim-3b088b12843b7a4459fe71e</span><span>ba96b70edafb7aa78.zip</span></p>
            <dl>
              <dt></dt><dd class="kind">Archivo ZIP - 2.2 MB</dd>
              <dt>Creación</dt><dd>hoy 06:45</dd>
              <dt>Modificación</dt><dd>hoy 06:45</dd>
              <dt>Última apertura</dt><dd>hoy 06:45</dd>
              <dt></dt><dd class="link">Agregar etiquetas...</dd>
            </dl>
          </div>
        </div>
        <div class="path">
          <svg width="19" height="20" viewBox="0 0 19 20"><path d="M3 0h13l3 13v6H0v-6z" fill="#777"/><path d="M4 1.500h11l2 10H2z" fill="#b9bcbf"/><path d="M5 3h9v4H5z" fill="#e8ebee"/><path d="M1 13h17v5H1z" fill="#555"/></svg><span class="pt p1">Raul Vazquez</span><svg class="ch"><use href="#i-chev"/></svg>
          <svg width="21" height="20" viewBox="0 0 24 22"><use href="#f-folder" width="24" height="22"/><path d="M12 8v8M9 17h6" stroke="#2e86b5" stroke-width="2"/></svg><span class="pt p2">Us</span><svg class="ch"><use href="#i-chev"/></svg>
          <svg width="20" height="20"><use href="#f-home"/></svg><span class="pt p2">rau</span><svg class="ch"><use href="#i-chev"/></svg>
          <svg width="21" height="20" viewBox="0 0 24 22"><use href="#f-folder" width="24" height="22"/><circle cx="12" cy="12" r="4" fill="none" stroke="#2e86b5" stroke-width="1.500"/></svg><span class="pt p2">De</span><svg class="ch"><use href="#i-chev"/></svg>
          <svg width="21" height="20"><use href="#f-folder"/></svg><span class="pt p3">ManimInstall</span><svg class="ch"><use href="#i-chev"/></svg>
          <svg width="20" height="22"><use href="#f-zip"/></svg><span class="pt p4">manim-3b088b12843b7a4459fe71eba96b70edafb7aa78.zip</span>
        </div>
      </div>
    </div>
  </section>

  <svg class="cursor" viewBox="0 0 17 26"><path d="M1 1v20l4.800-4.500L9 24l3.500-1.500L9.300 15.500H16z" fill="#000" stroke="#fff" stroke-width="1.500"/></svg>
</main>
<p class="caption">[Music]</p>
</body>
</html>
```
FILE: styles.css
```
* { box-sizing: border-box; }
body { margin: 0; width: 2048px; height: 1536px; overflow: hidden; background: #000; font-family: Inter, "Liberation Sans", sans-serif; display: flow-root; }
ul, p, h4, h5, dl, dd { margin: 0; padding: 0; list-style: none; }
svg { display: block; flex: none; }
button { font-family: inherit; margin: 0; padding: 0; }
.sprite { position: absolute; width: 0; height: 0; }
.glyph-a { font: bold 20px "Liberation Serif", serif; fill: #3f9cc0; }

.desktop { position: relative; margin: 192px 0 0 102px; width: 1843px; height: 1152px; overflow: hidden; background: linear-gradient(90deg, #004d26, #0a2410 20%, #003a26 30%, #002a1a 55%, #04220f 70%, #004a30 90%, #00553c); }

/* menu bar */
.menubar { height: 32px; background: #232323; color: #fff; display: flex; justify-content: space-between; font-size: 19px; line-height: 32px; font-weight: 500; letter-spacing: .05px; }
.menus { display: grid; grid-template-columns: 49px 89px 96px 95px 148px 39px 102px auto; padding-left: 30px; white-space: nowrap; }
.menus b { font-weight: 700; font-size: 19.500px; letter-spacing: .35px; }
.apple { width: 24px; height: 23px; margin: 3px 0 0 -3px; }
.status { display: grid; grid-template-columns: 46px 44px 43px 44px 47px 59px 33px 132px 36px 74px 19px 64px; padding-right: 14px; justify-items: center; align-items: center; white-space: nowrap; }
.pct { font-size: 17px; letter-spacing: -.5px; }
.clock { letter-spacing: .2px; }

/* browser chrome */
.browser { height: 1114px; border-radius: 7px; overflow: hidden; background: #fff; }
.tabstrip { height: 60px; background: #e8eaee; display: flex; align-items: flex-end; }
.dots { width: 114px; height: 60px; padding: 0 0 0 19px; display: flex; gap: 12px; align-items: center; }
.dots i { width: 17px; height: 17px; border-radius: 50%; background: #dcdcdc; border: 1px solid #cfcfcf; }
.tab { position: relative; width: 267.700px; height: 49px; padding: 0 0 1px 15px; display: grid; grid-template-columns: 24px 176px 12px; column-gap: 12px; align-items: center; color: #5f6368; font-size: 16.500px; letter-spacing: .35px; }
.tab.sep::after { content: ""; position: absolute; right: 0; top: 11px; width: 2px; height: 29px; background: #a3a6aa; }
.tab.active { background: #fff; border-radius: 12px 12px 0 0; }
.tab.active::before, .tab.active::after { content: ""; position: absolute; bottom: 0; width: 10px; height: 10px; }
.tab.active::before { left: -10px; background: radial-gradient(circle at 0 0, transparent 9.500px, #fff 10px); }
.tab.active::after { right: -10px; background: radial-gradient(circle at 100% 0, transparent 9.500px, #fff 10px); }
.fav { width: 24px; height: 24px; }
.tt { overflow: hidden; white-space: nowrap; line-height: 26px; -webkit-mask-image: linear-gradient(90deg, #000 82%, transparent); mask-image: linear-gradient(90deg, #000 82%, transparent); }
.x { width: 12px; height: 12px; color: #5f6368; }
.texfav { width: 24px; height: 24px; background: #fff; color: #000; font: bold 14px/20px "Liberation Serif", serif; letter-spacing: -2px; }
.texfav sub { font-size: 13px; vertical-align: -5px; line-height: 0; }
.plus { width: 18px; height: 18px; margin: 0 0 15px 21px; }

.toolbar { height: 53px; border-bottom: 1px solid #b2b4b6; background: #fff; display: flex; align-items: center; }
.navbtns { width: 156px; padding-left: 21px; display: flex; gap: 24px; }
.omnibox { width: 1578px; height: 40px; border-radius: 20px; background: #f1f3f4; display: flex; align-items: center; font-size: 19.500px; letter-spacing: .45px; color: #5f6368; white-space: nowrap; }
.lock { width: 13px; height: 17px; margin: 0 16px 0 19px; }
.org { width: 172px; line-height: 27px; border-right: 1.500px solid #9fa2a6; }
.url { width: 1255px; padding-left: 14px; color: #7a7f83; }
.url em { font-style: normal; color: #202124; }
.mag { width: 20px; height: 20px; margin-left: 20px; }
.star { width: 21px; height: 21px; margin-left: 26px; }
.ext { width: 30px; margin-left: 17px; font: bold 22px/24px "Liberation Serif", serif; letter-spacing: -2px; color: #555; }
.more { width: 5px; height: 20px; margin-left: 29px; fill: #5f6368; }

/* repository page */
.page { position: relative; height: 931px; overflow: hidden; background: #fff; font-size: 28px; letter-spacing: .25px; color: #586069; white-space: nowrap; }
.reponav { height: 74px; border-bottom: 2px solid #e1e4e8; background: #fafbfc; display: flex; line-height: 68px; font-size: 27.500px; letter-spacing: .6px; }
.rn { display: flex; align-items: center; height: 68px; }
.rn svg { fill: #b5b8bc; }
.rn b { height: 34px; line-height: 34px; border-radius: 17px; background: #e7e9eb; color: #4a5159; font-size: 24px; font-weight: 600; text-align: center; letter-spacing: 0; }
.rn-issues { width: 157px; }
.rn-issues span { width: 38px; margin-left: -1px; }
.rn-issues b { width: 50px; margin-left: 1px; }
.rn-pulls { width: 323px; }
.rn-pulls span { width: 183px; margin-left: 8px; }
.rn-pulls b { width: 36px; }
.rn-projects { width: 264px; }
.rn-projects span { width: 118px; margin-left: 8px; }
.rn-projects b { width: 37px; }
.rn-wiki { width: 169px; }
.rn-wiki span, .rn-insights span { margin-left: 7px; }
.desc { width: 395px; margin-top: 60px; height: 40px; line-height: 40px; display: flex; justify-content: flex-end; font-size: 32px; color: #24292e; }
.stats { margin-top: 39px; width: 1809px; height: 107px; border: 2px solid #e1e4e8; border-left: 0; border-radius: 0 5px 5px 0; overflow: hidden; }
.statrow { height: 88px; display: flex; align-items: center; }
.commits { width: 28px; display: flex; justify-content: flex-end; }
.branch { width: 22px; height: 35px; margin: 0 9px 0 208px; }
.statrow b { width: 25px; font-weight: 600; color: #24292e; }
.langbar { height: 16px; background: #3273a3; }
.actions { width: 1809px; margin-top: 37px; padding-left: 2px; display: flex; justify-content: space-between; }
.btn { width: 252px; height: 60px; border: 2px solid #c6c9cc; border-radius: 5px; background: linear-gradient(#fafbfc, #eff3f6); color: #24292e; font-size: 25.500px; font-weight: 600; letter-spacing: -.3px; padding-bottom: 2px; }
.btn.green { border-color: #2a5b3c; background: linear-gradient(#16a452, #0f9a4a); color: #e8f5ec; display: flex; align-items: center; justify-content: flex-end; padding-right: 23px; font-size: 26px; }
.btn.green i { margin-left: 6px; border: 9px solid transparent; border-top-color: #fff; border-bottom: 0; }
.files { width: 1809px; margin-top: 22px; border-right: 2px solid #e1e4e8; }
.tease { height: 94px; margin-right: -2px; padding-bottom: 1px; border: 2px solid #c3dcf3; border-left: 0; background: #f1f8ff; display: flex; align-items: center; font-size: 25px; letter-spacing: -.1px; }
.tease .q { width: 56px; margin-right: 8px; display: flex; justify-content: flex-end; }
.tease a { width: 67px; color: #1b63c0; }
.dots3 { width: 43px; height: 26px; margin-left: 18px; background: #dfe2e5; display: flex; gap: 3px; align-items: center; justify-content: center; border-radius: 2px; }
.dots3 i { width: 5px; height: 5px; border-radius: 50%; background: #444d56; }
.frow { height: 70.600px; padding: 4px 23px 0 304px; border-bottom: 1.500px solid #eaecef; display: flex; align-items: center; justify-content: space-between; }
.popover { position: absolute; left: 1500px; top: 436px; width: 307px; height: 352px; background: #fff; border: 1.500px solid #c9ccd0; border-radius: 5px; box-shadow: 0 4px 18px rgba(27, 31, 35, .15); }
.popover::before { content: ""; position: absolute; right: 24px; top: -12px; width: 22px; height: 22px; transform: rotate(45deg); background: #fff; border: 1.500px solid #c9ccd0; border-right: 0; border-bottom: 0; }
.poptop { height: 263px; border-bottom: 1.500px solid #d1d5da; padding: 29px 34px 0 0; display: flex; flex-direction: column; align-items: flex-end; }
.poptop a { color: #1b63c0; font-size: 26px; line-height: 40px; }
.copy { width: 60px; height: 60px; margin-top: 80px; border: 2px solid #c6c9cc; border-radius: 5px; background: linear-gradient(#fafbfc, #e6eaee); }

.shelf { height: 70px; padding-bottom: 2px; border-top: 1.500px solid #b2b2b2; background: #fff; display: flex; align-items: center; color: #45494d; white-space: nowrap; }
.zipmini { margin: 0 20px 2px 29px; }
.dl { width: 220px; font-size: 19.500px; letter-spacing: .35px; padding-top: 5px; }
.caret { width: 15px; height: 11px; }
.vr { width: 1.500px; height: 52px; margin-left: 23px; background: #d8d8d8; }
.showall { width: 153px; height: 46px; margin-left: 1306.500px; border: 1.500px solid #d6d6d6; border-radius: 5px; background: #fff; color: #45494d; font-size: 17px; font-weight: 500; letter-spacing: .25px; }
.close { width: 14px; height: 15px; margin-left: 20px; color: #666; }

/* finder window */
.finder { position: absolute; left: 453px; top: 329px; width: 1295px; height: 773px; border-radius: 8px; background: #fff; box-shadow: 0 0 2px rgba(0, 0, 0, .5), 0 28px 60px rgba(0, 0, 0, .55); color: #333; }
.fhead { height: 97px; border-radius: 8px 8px 0 0; background: linear-gradient(#e8e8e8, #d3d3d3); border-top: 1px solid #f2f2f2; }
.ftitle { height: 33px; padding: 0 13px 0 11px; display: grid; grid-template-columns: 1fr auto 1fr; align-items: center; }
.lights { display: flex; gap: 11.500px; }
.lights i { width: 17px; height: 17px; border-radius: 50%; }
.lights .r { background: #fc5b57; }
.lights .y { background: #ffb548; }
.lights .g { background: #08c853; }
.tname { display: flex; align-items: center; gap: 4px; font-size: 18.500px; letter-spacing: .1px; color: #3a3a3a; }
.tools { display: flex; margin-top: 2px; }
.tool { display: flex; flex-direction: column; align-items: center; font-size: 15.500px; letter-spacing: .1px; white-space: nowrap; }
.tool label { margin-top: 1px; line-height: 24px; color: #333; }
.fb { height: 33px; min-width: 55px; border-radius: 5px; background: linear-gradient(#fff, #f7f7f7); box-shadow: 0 1px 1px rgba(0, 0, 0, .25), 0 0 1px rgba(0, 0, 0, .2); display: flex; align-items: center; justify-content: center; gap: 8px; }
.pair { display: flex; gap: 1px; padding-right: 2px; }
.pair .fb { min-width: 36.500px; }
.t-nav { width: 130px; }
.t-view { width: 160px; margin-left: 141px; }
.t-org { width: 74px; margin-left: 15px; }
.t-act { width: 54px; margin-left: 14px; }
.t-share { width: 78px; margin-left: 13px; }
.t-tag { width: 135px; margin-left: 10px; }
.t-drop { width: 66px; margin-left: 93px; }
.t-drop .fb { gap: 5px; }
.t-search { width: 289px; margin-left: 12px; }
.t-search .fb { width: 287px; padding-right: 5px; }
.ph { font-size: 18px; color: #8b8b8b; }
.seg { gap: 0; width: 159px; }
.seg span { width: 40px; height: 33px; display: flex; align-items: center; justify-content: center; }
.seg span + span { border-left: 1px solid #ddd; }
.seg .on { background: #666; border: 0; }
.ftabs { height: 35px; border: 1px solid #afafaf; border-width: 1px 0 2px; background: #d0d0d0; display: flex; align-items: center; font-size: 15.500px; letter-spacing: .2px; color: #555; }
.ftabs span { flex: 1; text-align: center; }
.ftabs i { width: 38px; height: 32px; background: #bababa; border-left: 1px solid #a8a8a8; display: flex; align-items: center; justify-content: center; }
.fbody { height: 641px; display: flex; border-radius: 0 0 8px 8px; overflow: hidden; }
.side { width: 264px; background: #f0efef; border-right: 1px solid #dcdcdc; }
.side h4 { padding: 12px 0 0 13px; height: 35px; line-height: 20px; font-size: 15.500px; font-weight: 500; letter-spacing: .3px; color: #777; }
.side li { height: 37.440px; padding-left: 25px; display: flex; align-items: center; gap: 9px; font-size: 18px; letter-spacing: .15px; color: #444; }
.side li svg { width: 26px; height: 26px; }
.side li.sel { background: #c9c9c9; color: #222; }
.side .h-shared { padding-top: 18px; height: 40px; }
.side .h-tags { padding-top: 17px; }
.right { width: 1031px; display: flex; flex-direction: column; }
.cols { height: 608px; border-bottom: 2px solid #dcdcdc; display: flex; overflow: hidden; }
.col { width: 295px; border-right: 1.500px solid #e0e0e0; font-size: 17px; letter-spacing: .06px; color: #2b2b2b; white-space: nowrap; }
.col h5 { height: 35px; padding-left: 9px; border-top: 1.500px solid #dedede; line-height: 34px; font-size: 15.500px; font-weight: 500; letter-spacing: .12px; color: #333; }
.col h5.first { height: 33px; line-height: 32px; border-top: 0; border-bottom: 1.500px solid #dcdcdc; background: #f6f6f6; }
.col li { height: 26px; padding-left: 10px; display: flex; align-items: center; gap: 9px; }
.col li svg { width: 22px; height: 24px; }
.col .wide { letter-spacing: .5px; }
.col .wider { letter-spacing: .95px; }
.g1 { padding: 6px 0 8px; }
.g2 { padding-bottom: 8px; }
.g3 { padding-bottom: 4px; }
.g4 { padding-bottom: 8px; }
.col .dim { background: #dadada; }
.arrow { margin-left: auto; margin-right: 4px; border: 5px solid transparent; border-left: 8px solid #666; border-right: 0; }
.c2 .g1 { padding-top: 4px; }
.col .dark { background: #6b6b6b; color: #fff; height: 25px; }
.preview { flex: 1; display: flex; flex-direction: column; align-items: center; }
.bigzip { width: 225px; height: 290px; margin: 15px 0 0 1px; }
.soft { filter: blur(2px); }
.ziptext { font: 400 40px Inter, sans-serif; fill: #777; }
.pname { margin-top: 25px; font-size: 24.500px; letter-spacing: -.45px; line-height: 30.400px; color: #111; display: flex; flex-direction: column; align-items: center; }
.preview dl { width: 440px; display: grid; grid-template-columns: 172px auto; column-gap: 12px; font-size: 16.500px; letter-spacing: .4px; line-height: 24.700px; }
.preview dt { text-align: right; color: #a2a2a2; font-weight: 500; }
.preview dd { color: #222; font-weight: 500; }
.preview .kind { color: #a2a2a2; }
.preview .link { color: #3d87f5; font-weight: 400; }
.path { height: 33px; padding-left: 18px; display: flex; align-items: center; font-size: 15.500px; letter-spacing: .1px; color: #444; white-space: nowrap; }
.pt { margin-left: 6px; line-height: 24px; overflow: hidden; }
.ch { width: 7px; height: 10px; margin-right: 8px; }
.p1 { width: 111px; }
.p2 { width: 29px; -webkit-mask-image: linear-gradient(90deg, #000 30%, transparent 70%); mask-image: linear-gradient(90deg, #000 30%, transparent 70%); }
.p3 { width: 103px; }
.p4 { margin-left: 4px; letter-spacing: .3px; }

.cursor { position: absolute; left: 1057px; top: 531px; width: 17px; height: 26px; filter: drop-shadow(0 1px 1px rgba(0, 0, 0, .35)); }

.caption { position: absolute; left: 421px; top: 1393px; font: 90px/103px "Liberation Sans", Arial, sans-serif; color: #fff; }
```
